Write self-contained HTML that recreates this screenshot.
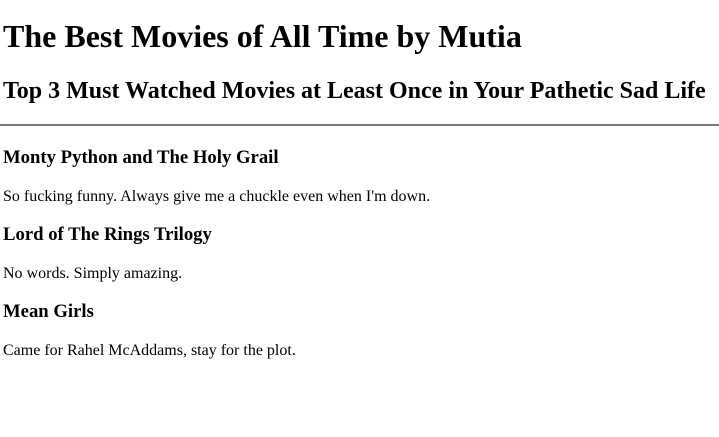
<!DOCTYPE html>
<html><head><meta charset="utf-8"><style>
html,body{margin:0;padding:0;background:#fff;}
body{padding:0 3px;font-family:"Liberation Serif",serif;color:#000;}
h1{font-size:32px;margin:18px 0 0;line-height:37px;}
h2{font-size:24px;margin:22px 0 0;line-height:28px;}
hr{margin:19px -3px 0;border:0;border-top:2px solid #777;height:0;}
h3{font-size:18.72px;margin:21px 0 0;line-height:22px;}
p{font-size:16px;margin:19px 0 0;line-height:18px;}
h3.n{margin-top:18px;}
</style></head><body>
<h1>The Best Movies of All Time by Mutia</h1>
<h2>Top 3 Must Watched Movies at Least Once in Your Pathetic Sad Life</h2>
<hr>
<h3>Monty Python and The Holy Grail</h3>
<p>So fucking funny. Always give me a chuckle even when I'm down.</p>
<h3 class="n">Lord of The Rings Trilogy</h3>
<p>No words. Simply amazing.</p>
<h3 class="n">Mean Girls</h3>
<p>Came for Rahel McAddams, stay for the plot.</p>
</body></html>
